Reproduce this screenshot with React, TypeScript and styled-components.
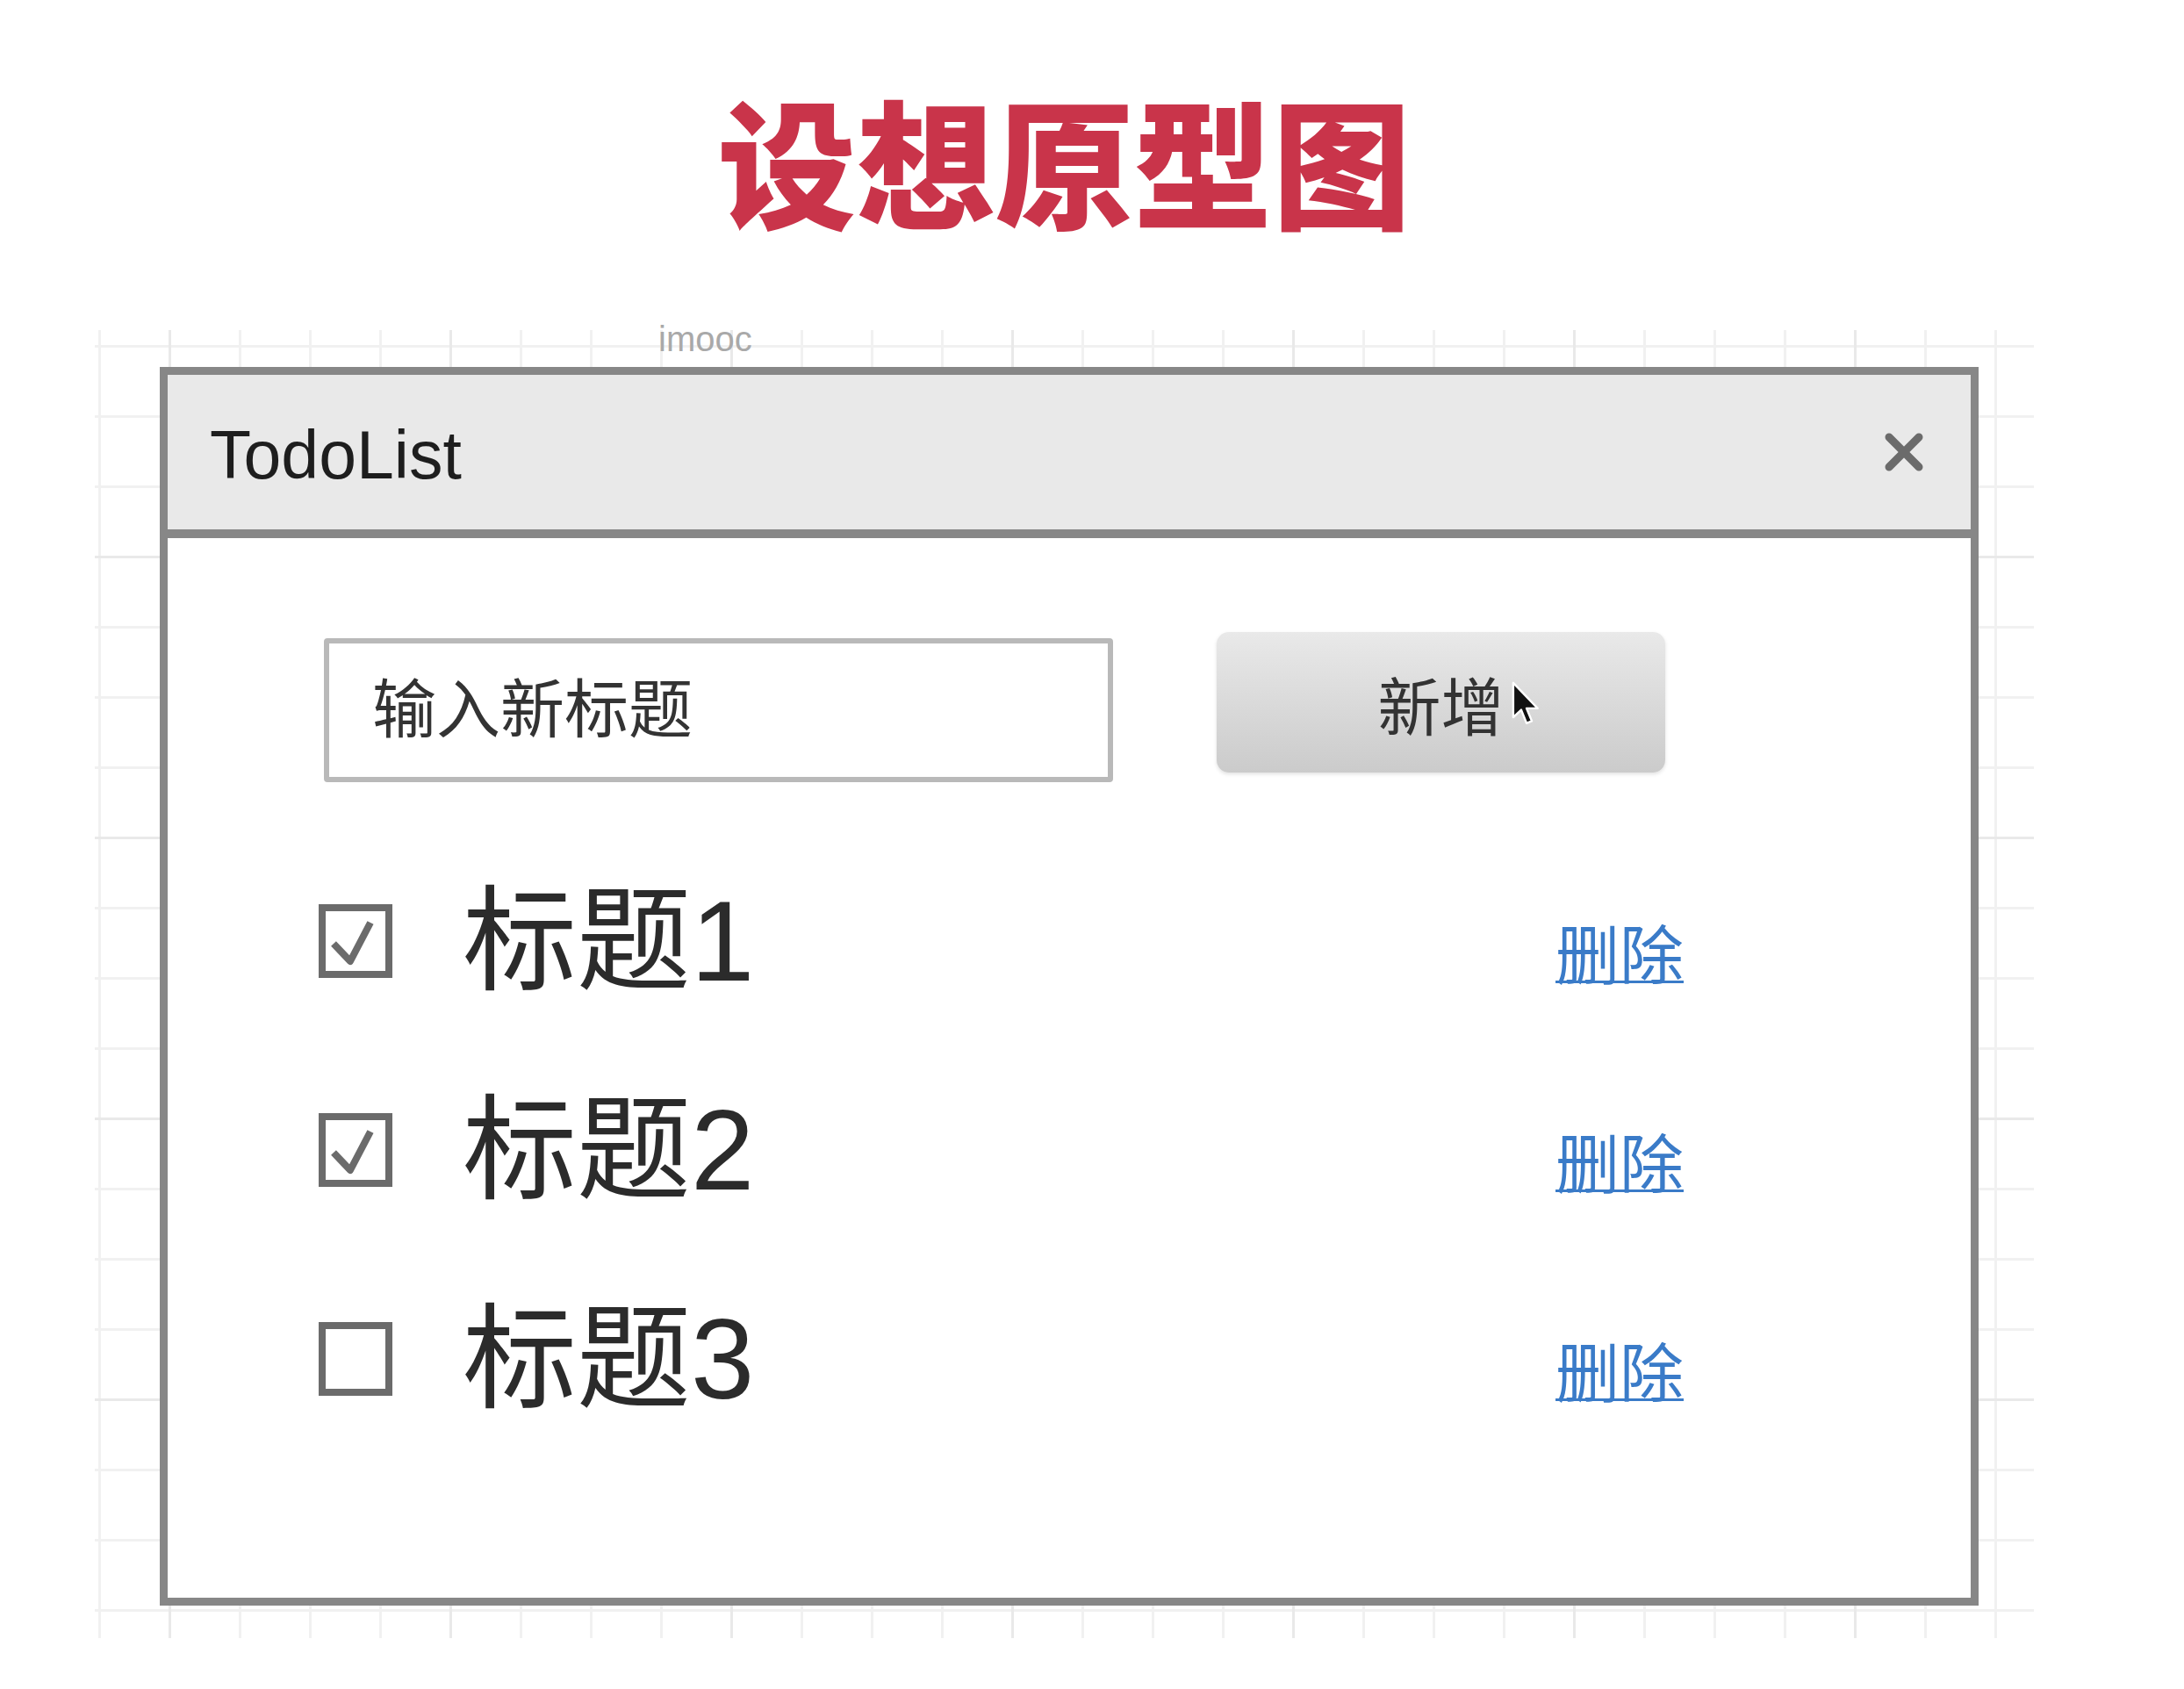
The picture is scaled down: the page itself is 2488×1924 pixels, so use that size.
import React from 'react'
import styled, { createGlobalStyle } from 'styled-components'

const GlobalStyle = createGlobalStyle`
  html, body {
    margin: 0;
    padding: 0;
    background: #fff;
  }
  body {
    font-family: "Liberation Sans", "Noto Sans CJK SC", sans-serif;
  }
`

const todos = [
  { id: 1, title: '标题1', done: true },
  { id: 2, title: '标题2', done: true },
  { id: 3, title: '标题3', done: false },
]

const App = () => {
  return (
    <Page>
      <GlobalStyle />
      <Column>
        <Title>设想原型图</Title>
        <Board>
          <Watermark>imooc</Watermark>
          <Window>
            <Header>
              <HeaderTitle>TodoList</HeaderTitle>
              <svg width="48" height="48" viewBox="0 0 48 48">
                <path d="M7 7 L41 41 M41 7 L7 41" stroke="#6b6b6b" strokeWidth="9" strokeLinecap="round" />
              </svg>
            </Header>
            <Body>
              <Toolbar>
                <Input placeholder="输入新标题" />
                <AddButton>
                  新增
                  <Cursor width="34" height="52" viewBox="0 0 28 43">
                    <path
                      d="M1.5 1.5 L1.5 34 L9 27 L14 39.5 L19 37.5 L14 25.5 L24.5 25.5 Z"
                      fill="#111"
                      stroke="#fff"
                      strokeWidth="2"
                      strokeLinejoin="round"
                    />
                  </Cursor>
                </AddButton>
              </Toolbar>
              <List>
                {todos.map((t) => (
                  <Row key={t.id}>
                    <Checkbox>
                      {t.done && (
                        <svg width="68" height="68" viewBox="0 0 68 68">
                          <polyline
                            points="9,37 28,57 51,13"
                            fill="none"
                            stroke="#6b6b6b"
                            strokeWidth="8"
                            strokeLinejoin="round"
                          />
                        </svg>
                      )}
                    </Checkbox>
                    <ItemTitle>{t.title}</ItemTitle>
                    <DeleteLink href="#">删除</DeleteLink>
                  </Row>
                ))}
              </List>
            </Body>
          </Window>
        </Board>
      </Column>
    </Page>
  )
}

export default App

const Page = styled.div`
  width: 2488px;
  height: 1924px;
  padding-left: 108px;
  box-sizing: border-box;
  overflow: hidden;
`
const Column = styled.div`
  width: 2209px;
  display: flex;
  flex-direction: column;
`
const Title = styled.h1`
  margin: 0 0 116px;
  padding-top: 102px;
  text-align: center;
  font-family: "Noto Sans CJK SC", sans-serif;
  font-size: 158px;
  line-height: 1;
  font-weight: 900;
  color: #c9344a;
`
const Board = styled.div`
  position: relative;
  height: 1490px;
  box-sizing: border-box;
  padding: 42px 63px 37px 74px;
  background-image:
    linear-gradient(to right, #e9e9e9 0 3px, transparent 3px),
    linear-gradient(to bottom, #e9e9e9 0 3px, transparent 3px),
    linear-gradient(to right, #f1f1f1 0 3px, transparent 3px),
    linear-gradient(to bottom, #f1f1f1 0 3px, transparent 3px);
  background-size: 320px 320px, 320px 320px, 80px 80px, 80px 80px;
  background-position: 84px 0, 0 257px, 4px 0, 0 17px;
`
const Watermark = styled.div`
  position: absolute;
  left: 642px;
  top: -12px;
  font-family: "Liberation Sans", sans-serif;
  font-size: 40px;
  color: #a9a9a9;
`
const Window = styled.div`
  height: 100%;
  box-sizing: border-box;
  border: 9px solid #878787;
  background: #fff;
  display: flex;
  flex-direction: column;
`
const Header = styled.div`
  height: 186px;
  box-sizing: border-box;
  border-bottom: 10px solid #878787;
  background: #e9e9e9;
  display: flex;
  align-items: center;
  justify-content: space-between;
  padding: 0 52px 0 48px;
`
const HeaderTitle = styled.div`
  padding-top: 6px;
  font-family: "Liberation Sans", sans-serif;
  font-size: 77px;
  color: #1e1e1e;
`
const Body = styled.div`
  padding: 107px 0 0 172px;
`
const Toolbar = styled.div`
  display: flex;
  align-items: flex-start;
  gap: 118px;
  padding-left: 6px;
`
const Input = styled.input`
  width: 899px;
  height: 164px;
  margin-top: 7px;
  box-sizing: border-box;
  border: 6px solid #b9b9b9;
  border-radius: 4px;
  padding: 0 0 14px 49px;
  font-family: "Noto Sans CJK SC", sans-serif;
  font-size: 73px;
  color: #333;
  outline: none;
  &::placeholder {
    color: #333;
  }
`
const AddButton = styled.button`
  position: relative;
  width: 511px;
  height: 160px;
  border: none;
  border-radius: 14px;
  background: linear-gradient(to bottom, #e9e9e9, #cbcbcb);
  box-shadow: 0 2px 4px rgba(0, 0, 0, 0.12);
  font-family: "Noto Sans CJK SC", sans-serif;
  font-size: 72px;
  color: #333;
  padding: 0;
`
const Cursor = styled.svg`
  position: absolute;
  left: 336px;
  top: 56px;
`
const List = styled.div`
  margin-top: 62px;
  display: flex;
  flex-direction: column;
`
const Row = styled.div`
  width: 1555px;
  height: 238px;
  display: flex;
  align-items: center;
`
const Checkbox = styled.span`
  width: 84px;
  height: 84px;
  box-sizing: border-box;
  border: 8px solid #6b6b6b;
  display: flex;
  align-items: center;
  justify-content: center;
`
const ItemTitle = styled.div`
  flex: 1;
  margin-left: 80px;
  font-family: "Liberation Sans", "Noto Sans CJK SC", sans-serif;
  font-size: 130px;
  line-height: 1;
  color: #2b2b2b;
`
const DeleteLink = styled.a`
  margin-top: 22px;
  font-family: "Noto Sans CJK SC", sans-serif;
  font-size: 73px;
  color: #3a7bc8;
  text-decoration: underline;
  text-decoration-thickness: 3px;
  text-decoration-skip-ink: none;
`
